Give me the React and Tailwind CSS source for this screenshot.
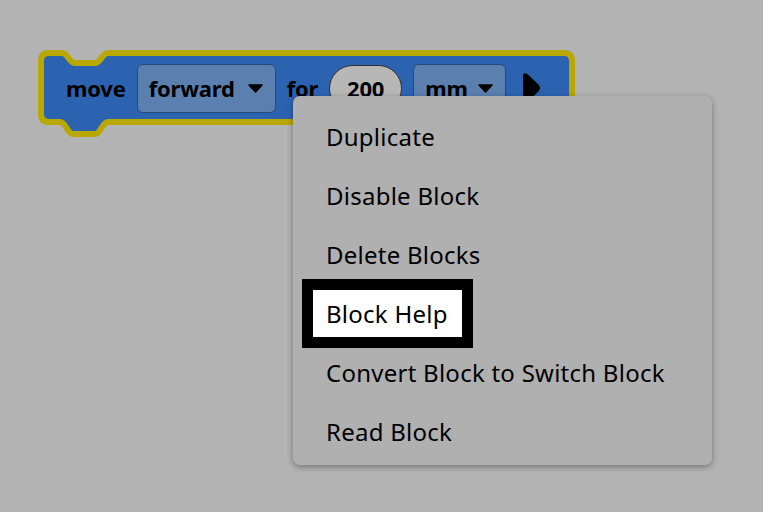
import React from 'react';

const Caret = () => (
  <svg width="15" height="9" viewBox="0 0 15 9" className="shrink-0">
    <path d="M1 1 L14 1 L7.5 8 Z" fill="#000" stroke="#000" strokeWidth="1.5" strokeLinejoin="round" />
  </svg>
);

const Dropdown = ({ label, width }) => (
  <div
    className={`flex h-[49px] items-center justify-between rounded-[6px] border border-[#27497a] bg-[#5b80b0] pl-[11px] pr-[12px] ${width}`}
  >
    <span>{label}</span>
    <Caret />
  </div>
);

const MoveBlock = () => (
  <div className="relative h-[90px] w-[537px]">
    <svg width="537" height="90" viewBox="0 0 537 90" className="absolute inset-0">
      <path
        d="M3 11 Q3 3 11 3 L24 3 C30 3 31 13 37 13 L57 13 C63 13 64 3 70 3 L526 3 Q534 3 534 11 L534 64 Q534 72 526 72 L70 72 C64 72 63 84 57 84 L35 84 C29 84 28 72 22 72 L11 72 Q3 72 3 64 Z"
        fill="#2c63b1"
        stroke="#b8a800"
        strokeWidth="6"
        strokeLinejoin="round"
      />
    </svg>
    <div className="relative flex h-[76px] items-center gap-[11px] pl-[28px] text-[22px] font-bold tracking-[-0.2px] text-black">
      <span>move</span>
      <Dropdown label="forward" width="w-[139px]" />
      <span>for</span>
      <div className="flex h-[47px] w-[73px] items-center justify-center rounded-full border border-[#2e2e2e] bg-[#b7b7b7]">
        200
      </div>
      <Dropdown label="mm" width="w-[93px]" />
      <svg width="20" height="32" viewBox="0 0 20 32" className="ml-[4px]">
        <path d="M3 4 Q3 1 6 3 L17 13.5 Q19 16 17 18.5 L6 29 Q3 31 3 28 Z" fill="#000" stroke="#000" strokeWidth="2" strokeLinejoin="round" />
      </svg>
    </div>
  </div>
);

const items = [
  'Duplicate',
  'Disable Block',
  'Delete Blocks',
  'Block Help',
  'Convert Block to Switch Block',
  'Read Block',
];

export default function App() {
  return (
    <div
      className="relative h-[512px] w-[763px] overflow-hidden bg-[#b3b3b3] pl-[38px] pt-[50px]"
      style={{ fontFamily: '"Noto Sans", "Open Sans", sans-serif' }}
    >
      <MoveBlock />

      <div className="absolute left-[293px] top-[96px] flex h-[369px] w-[419px] flex-col items-start gap-[12px] rounded-[7px] bg-[#b0b0b0] pl-[20px] pt-[17px] shadow-[0_2px_6px_rgba(0,0,0,0.35)]">
        {items.map((item) => (
          <div
            key={item}
            className={`flex h-[47px] items-center pl-[13px] pr-[14px] text-[24px] tracking-[0.25px] text-black ${
              item === 'Block Help' ? 'bg-white outline-[11px] outline-solid outline-black' : ''
            }`}
          >
            {item}
          </div>
        ))}
      </div>
    </div>
  );
}
